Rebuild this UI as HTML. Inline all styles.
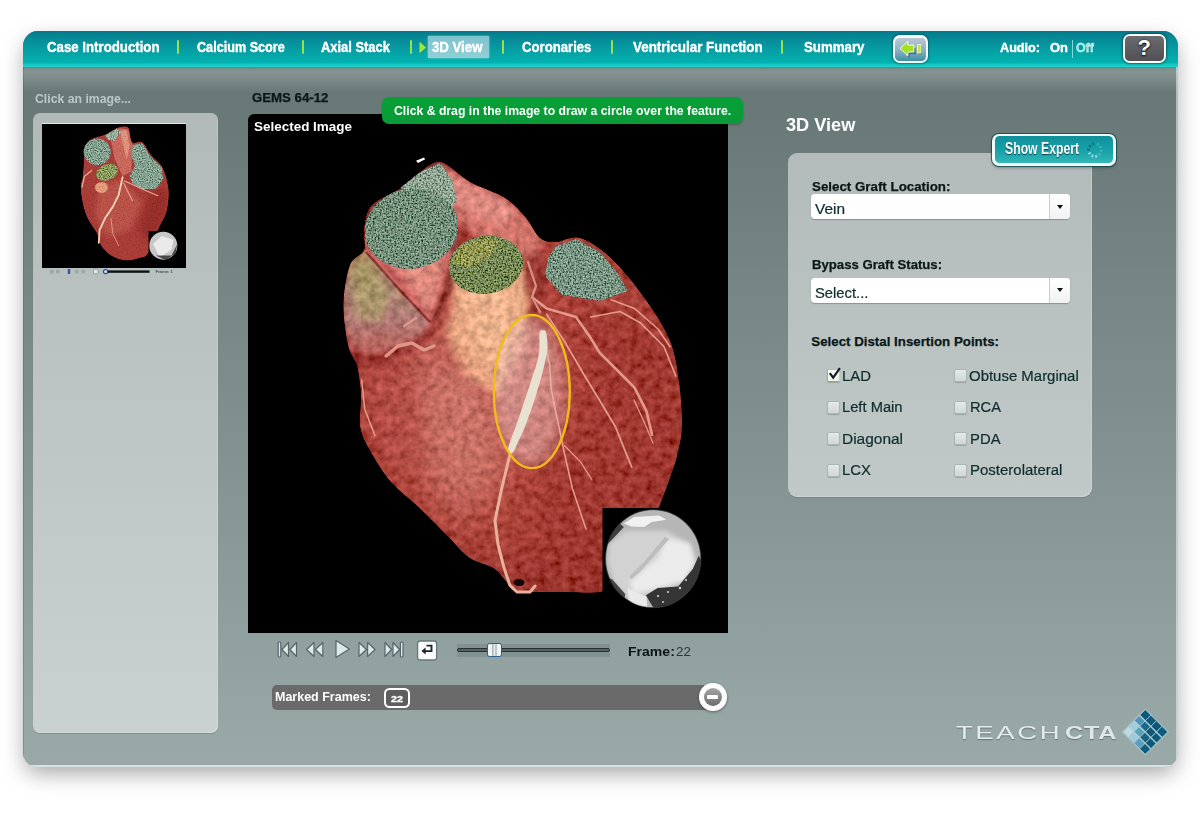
<!DOCTYPE html>
<html lang="en">
<head>
<meta charset="utf-8">
<title>TEACH CTA - 3D View</title>
<style>
*{box-sizing:border-box;margin:0;padding:0}
html,body{width:1200px;height:818px;background:#fff;overflow:hidden}
body{font-family:"Liberation Sans",sans-serif;position:relative}
#frame{position:absolute;left:23px;top:31px;width:1155px;height:736px;border-radius:15px 15px 14px 14px;
 box-shadow:0 8px 22px -2px rgba(0,0,0,.36);overflow:hidden;
 background:linear-gradient(#5a8a84 36px,#7d8f8c 38px,#859391 41px,#7a8a88 49px,#677876 61px,#6b7b79 114px,#98a8a6 709px,#99a9a7 100%)}
#frame:after{content:"";position:absolute;left:0;right:0;bottom:0;height:2px;background:rgba(235,245,245,.75)}
#rline{position:absolute;right:0;top:36px;bottom:0;width:2px;background:rgba(235,245,245,.55)}
#lline{position:absolute;left:0;top:36px;bottom:0;width:1px;background:rgba(80,95,95,.35)}
#nav{position:absolute;left:0;top:0;width:100%;height:36px;
 background:linear-gradient(#04788a 0,#058492 12%,#0797a0 42%,#04a8a8 70%,#02b2b0 88%,#14c8c2 93%,#22d0ca 100%)}
#navshadow{display:none}
/* all coordinates below are page coordinates; #ui is offset so that (0,0) = page origin */
#ui{position:absolute;left:-23px;top:-31px;width:1200px;height:818px}
.t{position:absolute;white-space:nowrap;font-weight:bold;transform-origin:0 50%;line-height:1}
.nt{color:#fff;font-size:14px;text-shadow:0 0 1px rgba(255,255,255,.4);-webkit-text-stroke:.3px #fff}
.sep{position:absolute;top:40px;width:1.800px;height:14px;background:#98e444;border-radius:1px;margin-left:-.5px}
.panel{position:absolute;background:rgba(255,255,255,.49);border-radius:7px;box-shadow:inset -1px -1px 0 rgba(255,255,255,.18),0 1px 1px rgba(60,80,80,.25)}
.dk{color:#0a1818;-webkit-text-stroke:.25px #0a1818}
.ar{font-weight:normal;color:#0e2e2e;-webkit-text-stroke:.22px #0e2e2e}
.sel{position:absolute;left:811px;width:259px;height:25px;background:#fff;border-radius:4px;box-shadow:0 1px 1px rgba(0,0,0,.25)}
.sel i{position:absolute;right:0;top:0;width:21px;height:25px;border-left:1px solid #c8cccc;border-radius:0 4px 4px 0;background:linear-gradient(#fff,#f0f2f2)}
.sel i:after{content:"";position:absolute;left:6.500px;top:10.500px;border:3px solid transparent;border-top:4px solid #111;border-bottom:0}
.cb{position:absolute;width:13px;height:13px;border-radius:2px;background:linear-gradient(#e4e9e9,#cfd7d7);border:1px solid #aab5b5;box-shadow:0 1px 1px rgba(0,0,0,.18)}
</style>
</head>
<body>
<div id="frame">
  <div id="nav"></div>
  <div id="navshadow"></div>
  <div id="lline"></div><div id="rline"></div>
  <div id="ui">
<!-- NAV decorations -->
<i class="sep" style="left:177.5px"></i><i class="sep" style="left:302.5px"></i><i class="sep" style="left:410.5px"></i>
<i class="sep" style="left:502.5px"></i><i class="sep" style="left:611.5px"></i><i class="sep" style="left:781.5px"></i>
<div style="position:absolute;left:427.5px;top:36px;width:61px;height:22px;background:linear-gradient(#7fc3cf,#8fd0d6);box-shadow:0 0 2px rgba(255,255,255,.5)"></div>
<svg style="position:absolute;left:419px;top:41px" width="8" height="13" viewBox="0 0 8 13"><path d="M.5.8 7 6.5.5 12.2z" fill="#a4e634"/></svg>
<i style="position:absolute;left:1072px;top:40px;width:1px;height:18px;background:#7fdcdc"></i>
<!-- back button -->
<div style="position:absolute;left:892.5px;top:35px;width:35.5px;height:28px;border-radius:7px;background:#f4fbfb;box-shadow:0 0 2px 1px rgba(0,70,80,.55)">
  <div style="position:absolute;left:2.5px;top:2.5px;right:2.5px;bottom:2.5px;border-radius:4.5px;background:linear-gradient(#bcc6d2,#8fb3c4 50%,#3f8ea4)"></div>
  <svg style="position:absolute;left:0;top:0" width="36" height="28" viewBox="0 0 36 28">
    <path d="M8 14.5 15.5 7.5v3.8h6v6.4h-6v3.8z" fill="#1d4a5a" opacity=".55" transform="translate(1.2,1.6)"/>
    <path d="M7 13.5 14.8 6v4h6v7h-6v4z" fill="#a6e01e" stroke="#f4fbe8" stroke-width="1"/>
    <rect x="25.6" y="10.8" width="3.4" height="8.4" fill="#1d4a5a" opacity=".5"/>
    <rect x="24.6" y="9.6" width="3.4" height="8.4" fill="#c4e43c" stroke="#f0f8e0" stroke-width=".8"/>
  </svg>
</div>
<!-- help button -->
<div style="position:absolute;left:1122.5px;top:33.7px;width:43.5px;height:29.6px;border-radius:7px;background:#fff;box-shadow:0 0 2px 1px rgba(0,60,70,.6)">
  <div style="position:absolute;left:2.5px;top:2.5px;right:2.5px;bottom:2.5px;border-radius:4.5px;background:linear-gradient(#6b6b70,#5b5b60 55%,#505055)"></div>
  <span style="position:absolute;left:0;width:100%;top:2px;text-align:center;font-weight:bold;font-size:22px;line-height:24px;color:#fff;text-shadow:0 1px 2px #111,0 0 2px #222">?</span>
</div>

<!-- LEFT panel -->
<div class="panel" style="left:33px;top:113px;width:185px;height:620px"></div>
<div style="position:absolute;left:41.5px;top:122.5px;width:144.5px;height:145px;background:#000;border-top:1px solid #dfe8e8"></div>

<!-- MAIN black image panel -->
<div style="position:absolute;left:248px;top:113.5px;width:480px;height:519.5px;background:#000;border-radius:6px 0 0 0"></div>
<!-- tooltip -->
<div style="position:absolute;left:382.300px;top:96.500px;width:360.700px;height:27.500px;border-radius:7px;background:linear-gradient(#06a036,#0a9a38);box-shadow:0 1px 2px rgba(0,0,0,.25)"></div>

<!-- RIGHT panel -->
<div class="panel" style="left:787.5px;top:152.5px;width:304px;height:344.5px;border-radius:9px"></div>
<!-- show expert -->
<div style="position:absolute;left:992px;top:133.5px;width:123.5px;height:32px;border-radius:7px;background:#f2fbfb;box-shadow:0 0 0 1px rgba(10,70,80,.75),0 2px 3px rgba(0,0,0,.3)">
  <div style="position:absolute;left:2.5px;top:2.5px;right:2.5px;bottom:2.5px;border-radius:4.5px;background:linear-gradient(#0f8f9b,#1aa4aa 60%,#35b8b8)"></div>
  <svg style="position:absolute;left:92px;top:5px" width="22" height="22" viewBox="-11 -11 22 22"><g fill="none" stroke-width="2.6" stroke-dasharray="1.7 2.1"><path d="M-1-6.200A6.200 6.200 0 0 0-5.800 2.600" stroke="#0a5a66" opacity=".85"/><path d="M-5.800 2.600A6.200 6.200 0 0 0 4 4.800" stroke="#b4e6ea" opacity=".9"/><path d="M4 4.800A6.200 6.200 0 0 0 1-6.100" stroke="#7cccd4" opacity=".45"/></g></svg>
</div>
<div class="sel" style="top:194.2px"><i></i></div>
<div class="sel" style="top:277.5px"><i></i></div>
<!-- checkboxes -->
<i class="cb" style="left:827px;top:368.500px;width:12.500px;height:13px;background:linear-gradient(#f8fcf4,#eaf4e0);border-color:#b4c2a0 #c4d0b4 #98a878 #a4b288"></i>
<svg style="position:absolute;left:826px;top:364px" width="18" height="18" viewBox="826 364 18 18"><path d="M829.800 373.200 833.200 377.700 839.900 368.100" fill="none" stroke="#15152e" stroke-width="2.100" stroke-linejoin="miter"/></svg>
<i class="cb" style="left:826.5px;top:400.5px"></i>
<i class="cb" style="left:826.5px;top:432.2px"></i>
<i class="cb" style="left:826.5px;top:464px"></i>
<i class="cb" style="left:953.8px;top:369px"></i>
<i class="cb" style="left:953.8px;top:400.5px"></i>
<i class="cb" style="left:953.8px;top:432.2px"></i>
<i class="cb" style="left:953.8px;top:464px"></i>

<!-- transport controls -->
<svg style="position:absolute;left:272px;top:636px" width="172" height="28" viewBox="272 636 172 28">
  <g fill="#dbe9e9" stroke="#55666a" stroke-width="1.2" stroke-linejoin="round">
    <rect x="278.2" y="642" width="2.6" height="15" rx="1"/>
    <path d="M288.5 642.5v14l-6.6-7z"/><path d="M296.5 642.5v14l-6.6-7z"/>
    <path d="M314 642.5v14l-7.4-7z"/><path d="M322.8 642.5v14l-7.4-7z"/>
    <path d="M336 640.5v17l13.4-8.5z"/>
    <path d="M359 642.5v14l7.4-7z"/><path d="M367.6 642.5v14l7.4-7z"/>
    <path d="M385 642.5v14l6.6-7z"/><path d="M393 642.5v14l6.6-7z"/>
    <rect x="400.4" y="642" width="2.6" height="15" rx="1"/>
  </g>
  <rect x="417.6" y="641" width="19" height="19" rx="2.5" fill="#fbfdfd" stroke="#66777a" stroke-width="1.3"/>
  <path d="M426.500 645.600h5v5.500h-8.400" fill="none" stroke="#1c2628" stroke-width="1.900"/>
  <path d="M425.6 647.6 421.4 651.1 425.6 654.6z" fill="#1c2628"/>
</svg>
<!-- slider -->
<div style="position:absolute;left:457px;top:643.5px;width:152.5px;height:13px;background:rgba(90,108,106,.28)"></div>
<div style="position:absolute;left:456.500px;top:647.700px;width:153.500px;height:4.800px;border-radius:2.500px;background:#566262;border:1.300px solid #283232"></div>
<div style="position:absolute;left:486.500px;top:642.500px;width:15px;height:14.500px;border-radius:2.5px;border:1.6px solid #2c5f92;background:linear-gradient(90deg,#eef3f6 0,#eef3f6 30%,#9aa4aa 36%,#e2e8ec 46%,#e2e8ec 54%,#9aa4aa 62%,#eef3f6 70%)"></div>
<!-- marked frames bar -->
<div style="position:absolute;left:272px;top:685px;width:440px;height:24.600px;border-radius:5px 0 0 5px;background:#6a6a6a"></div>
<div style="position:absolute;left:384.200px;top:688px;width:26.300px;height:19.700px;border:2.200px solid #fff;border-radius:5.500px;background:#5e5e5e"></div>
<div style="position:absolute;left:699.200px;top:683.300px;width:27.400px;height:27.400px;border-radius:50%;background:#fdfdfd;box-shadow:0 1px 3px rgba(0,0,0,.4)">
  <div style="position:absolute;left:4.600px;top:4.600px;right:4.600px;bottom:4.600px;border-radius:50%;background:linear-gradient(#a4a4a4,#6c6c6c)"></div>
  <div style="position:absolute;left:8.200px;top:11.700px;width:11px;height:4px;border-radius:1px;background:#fff"></div>
</div>

<!-- TEACH CTA logo -->
<svg style="position:absolute;left:1121px;top:708px" width="50" height="50" viewBox="1121 708 50 50">
  <g transform="translate(1145.300 709.600) rotate(45) scale(7.900)">
    <rect x="-.12" y="-.12" width="4.240" height="4.240" fill="#b4d2da" opacity=".55"/>
    <g stroke="#9ec4d0" stroke-width=".1">
      <rect x="0" y="0" width="1" height="1" fill="#0e5878"/><rect x="1" y="0" width="1" height="1" fill="#0e5878"/><rect x="2" y="0" width="1" height="1" fill="#0d5675"/><rect x="3" y="0" width="1" height="1" fill="#0e5a7a"/>
      <rect x="0" y="1" width="1" height="1" fill="#4f95b8"/><rect x="1" y="1" width="1" height="1" fill="#1c6a8a"/><rect x="2" y="1" width="1" height="1" fill="#0e5878"/><rect x="3" y="1" width="1" height="1" fill="#0e5a7a"/>
      <rect x="0" y="2" width="1" height="1" fill="#a2ccda"/><rect x="1" y="2" width="1" height="1" fill="#5aa2be"/><rect x="2" y="2" width="1" height="1" fill="#16627f"/><rect x="3" y="2" width="1" height="1" fill="#0e5878"/>
      <rect x="0" y="3" width="1" height="1" fill="#bcdae2"/><rect x="1" y="3" width="1" height="1" fill="#a0cad8"/><rect x="2" y="3" width="1" height="1" fill="#5a9ec0"/><rect x="3" y="3" width="1" height="1" fill="#0f5c7c"/>
    </g>
    <path d="M0 1.040h4M0 2.040h4M0 3.040h4" stroke="#b8d4dc" stroke-width=".16" opacity=".8"/>
  </g>
</svg>
<span class="t nt" style="left:47.0px;top:39.2px;font-size:15.1px;transform:scaleX(0.877);">Case Introduction</span>
<span class="t nt" style="left:196.5px;top:39.2px;font-size:15.1px;transform:scaleX(0.837);">Calcium Score</span>
<span class="t nt" style="left:320.6px;top:39.2px;font-size:15.1px;transform:scaleX(0.855);">Axial Stack</span>
<span class="t nt" style="left:432.1px;top:39.2px;font-size:15.1px;transform:scaleX(0.875);">3D View</span>
<span class="t nt" style="left:522.0px;top:39.2px;font-size:15.1px;transform:scaleX(0.871);">Coronaries</span>
<span class="t nt" style="left:632.9px;top:39.2px;font-size:15.1px;transform:scaleX(0.889);">Ventricular Function</span>
<span class="t nt" style="left:804.0px;top:39.2px;font-size:15.1px;transform:scaleX(0.879);">Summary</span>
<span class="t nt" style="left:1000.4px;top:41.7px;font-size:12.2px;transform:scaleX(1.038);">Audio:</span>
<span class="t nt" style="left:1049.6px;top:41.7px;font-size:12.2px;transform:scaleX(1.061);">On</span>
<span class="t nt" style="left:1075.9px;top:41.7px;font-size:12.2px;transform:scaleX(1.015);color:#86ece6;text-shadow:none">Off</span>
<span class="t " style="left:34.6px;top:93.0px;font-size:12.0px;transform:scaleX(1.021);color:#bcc8c7">Click an image...</span>
<span class="t dk" style="left:252.0px;top:92.4px;font-size:12.8px;transform:scaleX(1.032);">GEMS 64-12</span>
<span class="t " style="left:254.3px;top:120.1px;font-size:13.5px;transform:scaleX(0.997);color:#fff">Selected Image</span>
<span class="t " style="left:393.6px;top:105.2px;font-size:12.3px;transform:scaleX(0.995);color:#fff">Click &amp; drag in the image to draw a circle over the feature.</span>
<span class="t " style="left:786.0px;top:116.3px;font-size:18.0px;transform:scaleX(1.009);color:#fff">3D View</span>
<span class="t " style="left:1005.0px;top:141.3px;font-size:16.8px;transform:scaleX(0.729);color:#fff;text-shadow:0 1px 1px rgba(0,40,50,.8)">Show Expert</span>
<span class="t dk" style="left:811.8px;top:179.5px;font-size:13.3px;transform:scaleX(1.002);">Select Graft Location:</span>
<span class="t dk" style="left:811.7px;top:259.1px;font-size:12.9px;transform:scaleX(1.020);">Bypass Graft Status:</span>
<span class="t dk" style="left:811.3px;top:334.9px;font-size:13.3px;transform:scaleX(1.000);">Select Distal Insertion Points:</span>
<span class="t ar" style="left:815.4px;top:202.4px;font-size:14.3px;transform:scaleX(1.080);">Vein</span>
<span class="t ar" style="left:814.6px;top:286.1px;font-size:14.0px;transform:scaleX(1.056);">Select...</span>
<span class="t ar" style="left:842.2px;top:368.8px;font-size:14.7px;transform:scaleX(1.016);">LAD</span>
<span class="t ar" style="left:842.2px;top:400.1px;font-size:14.7px;transform:scaleX(1.002);">Left Main</span>
<span class="t ar" style="left:841.9px;top:432.1px;font-size:14.8px;transform:scaleX(1.045);">Diagonal</span>
<span class="t ar" style="left:842.2px;top:463.4px;font-size:14.7px;transform:scaleX(1.017);">LCX</span>
<span class="t ar" style="left:969.3px;top:368.8px;font-size:14.7px;transform:scaleX(1.018);">Obtuse Marginal</span>
<span class="t ar" style="left:969.7px;top:400.1px;font-size:14.7px;transform:scaleX(0.998);">RCA</span>
<span class="t ar" style="left:970.2px;top:432.1px;font-size:14.8px;transform:scaleX(1.004);">PDA</span>
<span class="t ar" style="left:969.9px;top:463.4px;font-size:14.7px;transform:scaleX(1.020);">Posterolateral</span>
<span class="t " style="left:627.7px;top:645.0px;font-size:13.3px;transform:scaleX(1.056);color:#0d1515">Frame:</span>
<span class="t " style="left:676.2px;top:645.0px;font-size:13.3px;transform:scaleX(1.005);font-weight:normal;color:#2c3838">22</span>
<span class="t " style="left:275.3px;top:690.8px;font-size:12.7px;transform:scaleX(0.985);color:#fff">Marked Frames:</span>
<span class="t " style="left:391.4px;top:693.5px;font-size:9.5px;transform:scaleX(1.140);color:#fff;-webkit-text-stroke:.3px #fff">22</span>
<span class="t " style="left:955.6px;top:725.1px;font-size:17.6px;transform:scaleX(1.569);font-weight:normal;color:#e4ebeb;letter-spacing:1.6px;text-shadow:0 1px 1px rgba(60,80,80,.6)">TEACH</span>
<span class="t " style="left:1064.7px;top:725.1px;font-size:17.6px;transform:scaleX(1.433);color:#dfe6e6;letter-spacing:.5px;text-shadow:0 1px 1px rgba(60,80,80,.6)">CTA</span>
<!-- thumbnail heart -->
<svg style="position:absolute;left:41.5px;top:123.5px" width="144.500" height="144" viewBox="41.5 123.500 144.500 144">
<defs>
  <filter id="ttex" x="41" y="123" width="146" height="146" filterUnits="userSpaceOnUse">
    <feTurbulence type="fractalNoise" baseFrequency=".7" numOctaves="2" seed="5" result="n"/>
    <feColorMatrix in="n" type="matrix" values="1.2 0 0 0 .4  1.2 0 0 0 .4  1.2 0 0 0 .4  0 0 0 0 1" result="m"/>
    <feComposite in="SourceGraphic" in2="m" operator="arithmetic" k1="1" k2="0" k3="0" k4="0" result="c"/>
    <feComposite in="c" in2="SourceGraphic" operator="in"/>
  </filter>
  <filter id="tspeck" x="41" y="123" width="146" height="146" filterUnits="userSpaceOnUse">
    <feTurbulence type="fractalNoise" baseFrequency=".9" numOctaves="1" seed="8" result="n"/>
    <feColorMatrix in="n" type="matrix" values="2.4 0 0 0 -.7  2.4 0 0 0 -.7  2.4 0 0 0 -.7  0 0 0 0 1" result="m"/>
    <feComposite in="SourceGraphic" in2="m" operator="arithmetic" k1=".9" k2=".5" k3=".22" k4="-.06" result="c"/>
    <feComposite in="c" in2="SourceGraphic" operator="in"/>
  </filter>
  <filter id="tb"><feGaussianBlur stdDeviation="2.5"/></filter>
  <filter id="tb1"><feGaussianBlur stdDeviation=".5"/></filter>
  <clipPath id="thc"><path d="M118.2 126.8C122.1 125.7 125.8 125.0 128.0 127.4C130.2 129.8 129.2 139.2 131.5 141.5C133.8 143.8 138.5 139.4 141.7 141.5C144.9 143.6 147.1 150.0 150.5 154.2C153.9 158.4 159.4 161.8 162.2 166.9C165.0 172.0 166.5 179.3 167.5 184.5C168.5 189.7 168.5 193.3 168.1 198.2C167.7 203.1 167.0 208.7 165.2 213.9C163.4 219.1 160.2 223.0 157.3 229.5C154.4 236.0 150.8 248.3 147.6 253.0C144.3 257.7 141.7 256.7 137.8 257.9C133.9 259.1 128.7 260.5 124.1 260.0C119.5 259.5 114.3 257.5 110.4 255.0C106.5 252.5 102.9 248.8 100.6 245.2C98.3 241.6 99.0 238.0 96.7 233.4C94.4 228.8 89.4 223.0 86.9 217.8C84.5 212.6 83.1 207.3 82.0 202.1C80.9 196.9 80.1 190.7 80.1 186.5C80.1 182.3 81.5 181.3 82.0 176.7C82.5 172.1 83.2 164.0 83.4 159.1C83.6 154.2 82.2 150.8 83.4 147.4C84.7 144.0 87.4 140.8 90.9 138.6C94.4 136.4 100.0 136.1 104.5 134.1C109.0 132.1 114.3 127.9 118.2 126.8z"/></clipPath>
</defs>
<g filter="url(#ttex)"><g clip-path="url(#thc)">
  <rect x="70" y="120" width="110" height="150" fill="#ac3e38"/>
  <path d="M98.7 184.5 122.1 178.7 141.7 202.1 130.0 229.5 106.5 237.3 94.8 213.9z" fill="#c25a50" filter="url(#tb)" opacity=".8"/>
  <path d="M149.5 190.4 167.1 186.5 167.1 213.9 149.5 241.3 137.8 229.5z" fill="#982e2a" filter="url(#tb)" opacity=".8"/>
  <path d="M110.4 139.6 118.2 127.8 128.0 128.8 131.9 143.5 130.9 170.9 122.1 175.7 114.3 159.1z" fill="#cf6a5e" filter="url(#tb1)"/>
  <path d="M119.2 129.8 126.1 129.8 129.0 145.4 126.1 159.1z" fill="#e8a288" filter="url(#tb1)" opacity=".8"/>
  <ellipse cx="101.0" cy="186.9" rx="6.500" ry="5.500" fill="#e8a07c" filter="url(#tb1)"/>
</g></g>
<g filter="url(#tspeck)">
  <path d="M104.5 134.7 116.3 127.8 120.2 131.7 114.3 140.5 107.5 139.6z" fill="#8fa894"/>
  <ellipse cx="96.7" cy="151.3" rx="13.600" ry="13.300" fill="#789884"/>
  <ellipse cx="106.5" cy="171.8" rx="11.500" ry="8" transform="rotate(-22 106.5 171.8)" fill="#80944c"/>
  <path d="M131.9 144.4 141.7 142.5 149.5 155.2 161.3 166.9 162.8 178.7 155.4 188.8 141.7 188.8 131.9 183.0 129.0 175.2 134.3 165.4 130.9 155.2z" fill="#7a9a86"/>
</g>
<g fill="none" stroke="#e8a898" stroke-linecap="round" stroke-linejoin="round" filter="url(#tb1)">
  <path d="M122.1 176.7 118.2 194.3 112.4 206.1 104.5 217.8 99.1 229.5 98.3 242.2" stroke-width="1.900" stroke="#ecd0b4"/>
  <path d="M123.1 182.6 128.0 192.4 131.9 200.2" stroke-width="1.100"/>
  <path d="M124.1 180.6 141.7 188.5 157.3 195.3" stroke-width="1.100"/>
  <path d="M91.2 169.9 84.0 175.7 81.5 186.5" stroke-width="1.300"/>
  <path d="M110.4 217.8 112.4 233.4 118.2 245.2" stroke-width=".8"/>
</g>
<rect x="148" y="230.500" width="37" height="34" fill="#000"/>
<circle cx="162.800" cy="245.200" r="14" fill="#c6c6c6"/>
<path d="M152.5 243.2 161.3 235.4 173.0 239.3 171.0 249.1 159.3 256.9z" fill="#eaeaea" filter="url(#tb1)"/>
<path d="M155.4 255.0 165.2 259.8 175.0 253.0 176.9 243.2 171.0 255.0z" fill="#4a4a4a" filter="url(#tb1)"/>
</svg>
<!-- thumbnail mini controls -->
<svg style="position:absolute;left:46px;top:268px" width="130" height="8" viewBox="46 268 130 8">
  <g fill="#93a3a5" opacity=".8"><rect x="50" y="269.800" width="3.600" height="3.600"/><rect x="56" y="269.800" width="3.600" height="3.600"/><rect x="75" y="269.800" width="3.600" height="3.600"/><rect x="81.500" y="269.800" width="3.600" height="3.600"/></g>
  <rect x="67.800" y="269" width="2.400" height="5" fill="#3058a8"/>
  <rect x="93.500" y="269.200" width="4.600" height="4.600" rx="1" fill="#dfe7e8" stroke="#5a6a6c" stroke-width=".5"/>
  <rect x="104" y="270.400" width="45.500" height="2.400" fill="#0a1212"/>
  <circle cx="105.600" cy="271.600" r="2.100" fill="#cfdcee" stroke="#1c4a92" stroke-width="1.100"/>
  <text x="155.400" y="273.200" font-family="Liberation Sans,sans-serif" font-size="4.200" font-weight="bold" fill="#2c3a3a" opacity=".85">Frame: 1</text>
</svg>
<!-- MAIN heart image (page coords via viewBox) -->
<svg style="position:absolute;left:248px;top:153px" width="480" height="480" viewBox="248 153 480 480">
<defs>
  <filter id="tex" x="248" y="153" width="480" height="480" filterUnits="userSpaceOnUse">
    <feTurbulence type="fractalNoise" baseFrequency=".13" numOctaves="3" seed="11" result="n"/>
    <feColorMatrix in="n" type="matrix" values="1.2 0 0 0 -.1  1.2 0 0 0 -.1  1.2 0 0 0 -.1  0 0 0 0 1" result="m"/>
    <feComposite in="SourceGraphic" in2="m" operator="arithmetic" k1=".8" k2=".6" k3=".05" k4="-.025" result="c"/>
    <feComposite in="c" in2="SourceGraphic" operator="in"/>
  </filter>
  <filter id="speck" x="248" y="153" width="480" height="480" filterUnits="userSpaceOnUse">
    <feTurbulence type="fractalNoise" baseFrequency=".6" numOctaves="2" seed="3" result="n"/>
    <feColorMatrix in="n" type="matrix" values="2.4 0 0 0 -.7  2.4 0 0 0 -.7  2.4 0 0 0 -.7  0 0 0 0 1" result="m"/>
    <feComposite in="SourceGraphic" in2="m" operator="arithmetic" k1=".9" k2=".5" k3=".22" k4="-.06" result="c"/>
    <feComposite in="c" in2="SourceGraphic" operator="in"/>
  </filter>
  <filter id="b2"><feGaussianBlur stdDeviation="2"/></filter>
  <filter id="b3"><feGaussianBlur stdDeviation="3"/></filter>
  <filter id="b4"><feGaussianBlur stdDeviation="4"/></filter>
  <filter id="b8"><feGaussianBlur stdDeviation="8"/></filter>
  <filter id="b14"><feGaussianBlur stdDeviation="14"/></filter>
  <filter id="b1"><feGaussianBlur stdDeviation=".6"/></filter>
  <clipPath id="hc"><path d="M441.0 162.0C449.3 163.7 459.3 176.0 470.0 182.0C480.7 188.0 495.7 192.0 505.0 198.0C514.3 204.0 520.2 211.3 526.0 218.0C531.8 224.7 535.0 234.0 540.0 238.0C545.0 242.0 549.3 242.0 556.0 242.0C562.7 242.0 570.8 235.3 580.0 238.0C589.2 240.7 600.0 247.7 611.0 258.0C622.0 268.3 636.2 286.2 646.0 300.0C655.8 313.8 664.5 327.3 670.0 341.0C675.5 354.7 677.0 368.0 679.0 382.0C681.0 396.0 682.2 413.3 682.0 425.0C681.8 436.7 679.7 444.2 678.0 452.0C676.3 459.8 675.2 462.8 672.0 472.0C668.8 481.2 664.3 494.0 659.0 507.0C653.7 520.0 647.5 537.3 640.0 550.0C632.5 562.7 620.7 576.0 614.0 583.0C607.3 590.0 609.0 590.5 600.0 592.0C591.0 593.5 571.2 592.0 560.0 592.0C548.8 592.0 540.0 592.0 533.0 592.0C526.0 592.0 521.5 592.3 518.0 592.0C514.5 591.7 514.3 592.2 512.0 590.0C509.7 587.8 507.2 582.7 504.0 579.0C500.8 575.3 498.8 571.6 493.0 568.0C487.2 564.4 476.6 562.7 469.0 557.4C461.4 552.1 455.6 544.1 447.5 536.0C439.4 527.9 430.0 518.0 420.6 509.0C411.2 500.0 399.5 491.8 391.0 482.0C382.5 472.2 374.8 459.3 369.6 450.0C364.4 440.7 361.4 435.0 360.0 426.0C358.6 417.0 361.5 406.0 361.0 396.0C360.5 386.0 359.2 374.5 357.0 366.0C354.8 357.5 350.2 355.3 348.0 345.0C345.8 334.7 343.2 317.3 343.5 304.0C343.8 290.7 346.6 274.0 350.0 265.0C353.4 256.0 361.7 256.2 364.0 250.0C366.3 243.8 362.7 235.5 364.0 228.0C365.3 220.5 365.8 211.7 372.0 205.0C378.2 198.3 393.0 193.5 401.0 188.0C409.0 182.5 413.3 176.3 420.0 172.0C426.7 167.7 432.7 160.3 441.0 162.0z"/></clipPath>
  <radialGradient id="hg" cx="510" cy="390" r="250" gradientUnits="userSpaceOnUse">
    <stop offset="0" stop-color="#b84e44"/><stop offset=".6" stop-color="#aa4239"/><stop offset=".88" stop-color="#93312b"/><stop offset="1" stop-color="#6e201c"/>
  </radialGradient>
</defs>
<rect x="248" y="153" width="480" height="480" fill="#000"/>
<g filter="url(#tex)">
 <g clip-path="url(#hc)">
  <rect x="330" y="155" width="370" height="445" fill="url(#hg)"/>
  <!-- right ventricle -->
  <path d="M570 300 690 330 690 520 600 600 530 600 540 470 580 400z" fill="#9c362f" filter="url(#b14)" opacity=".7"/>
  <!-- central lighter area -->
  <path d="M400 350 470 310 528 322 522 430 490 510 452 525 410 460z" fill="#c46a60" filter="url(#b14)" opacity=".7"/>
  <path d="M420 380 480 360 500 470 450 500z" fill="#d07e72" filter="url(#b14)" opacity=".6"/>
  <path d="M362 380 410 365 420 470 385 460z" fill="#b5504a" filter="url(#b8)" opacity=".8"/>
  <!-- left atrial appendage (speckled tan) -->
  <linearGradient id="apg" x1="0" y1="255" x2="0" y2="356" gradientUnits="userSpaceOnUse"><stop offset="0" stop-color="#aa8e60"/><stop offset=".35" stop-color="#aa8672"/><stop offset=".65" stop-color="#b27a76"/><stop offset="1" stop-color="#b65a52"/></linearGradient>
  <path d="M349 262 366 250 398 288 430 322 424 333 405 345 372 357 350 347 344 318 343.500 290z" fill="url(#apg)" filter="url(#b2)"/>
  <path d="M354 270 368 262 388 296 380 322 356 318z" fill="#a8a468" filter="url(#b3)" opacity=".6"/>
  <!-- top roof pink -->
  <path d="M430 163 470 182 505 198 528 220 542 240 540 262 505 250 470 232 452 215z" fill="#d2746a" filter="url(#b3)"/>
  <path d="M441 164 470 183 500 197 520 214 500 226 470 214 452 200z" fill="#e09088" filter="url(#b3)" opacity=".7"/>
  <!-- aorta (tan/orange) -->
  <path d="M448 268 452 300 446 335 466 376 500 396 522 352 530 300 524 262z" fill="#e3a07e" filter="url(#b4)"/>
  <path d="M458 285 520 282 524 320 498 372 470 348z" fill="#efb690" filter="url(#b8)" opacity=".85"/>
  <!-- pulmonary tube -->
  <path d="M364 238 458 234 453 258 444 290 434 316 430 323 398 288 366 252z" fill="#c8645e" filter="url(#b1)"/>
  <path d="M392 262 446 258 434 306 428 312z" fill="#de8c80" filter="url(#b3)" opacity=".9"/>
  <!-- shading between tubes and under appendage -->
  <path d="M455 222 462 250 452 288 437 322 432 320 443 290 450 262z" fill="#7a2a28" filter="url(#b2)" opacity=".8"/>
  <path d="M366 252 398 288 430 322" fill="none" stroke="#6e2422" stroke-width="2.400" filter="url(#b1)" opacity=".75"/>
  <path d="M524 262 532 300 526 330 540 312 548 282 540 246z" fill="#8c2e2c" filter="url(#b3)" opacity=".7"/>
  <path d="M350 348 372 358 405 346 424 334 432 324 436 334 410 354 376 368 352 362z" fill="#8a2c2a" filter="url(#b2)" opacity=".55"/>
  <!-- ellipse interior lighter -->
  <ellipse cx="530" cy="392" rx="30" ry="70" fill="#d69490" opacity=".5" filter="url(#b4)"/>
 </g>
</g>
<!-- green cut surfaces -->
<g filter="url(#speck)">
  <path d="M400 188 420 172 440 163 452 180 457 200 448 212 430 196z" fill="#869e8a"/>
  <ellipse cx="411.5" cy="228.500" rx="47" ry="40" transform="rotate(-12 411.5 228.5)" fill="#67866f"/>
  <ellipse cx="486" cy="264.700" rx="37.5" ry="29" transform="rotate(-8 486 264.7)" fill="#697e40"/>
  <path d="M452 262 462 246 482 238 500 240 490 256 470 268z" fill="#94963c" opacity=".75"/>
  <path d="M545 276 548 258 556 246 576 239 600 252 617 272 628 291 600 301 562 295z" fill="#6c8c78"/>
</g>
<!-- vessels -->
<g fill="none" stroke="#eca494" stroke-linecap="round" stroke-linejoin="round" filter="url(#b1)" opacity=".9">
  <path d="M532 297 546.7 308.600 576 317 590.700 338 599.500 352.600 617 370 634.700 387.800 646.400 411 652 434.700" stroke-width="2.600"/>
  <path d="M590.700 317 620 311.500 640.600 323 664 346.700 675.800 376" stroke-width="1.7"/>
  <path d="M611 299.800 634.700 308.600 658 329 670 346.700" stroke-width="1.6"/>
  <path d="M546.700 314.400 564 340.800 584.800 376 599.400 400 615.600 427 626.300 453.800 631.700 467" stroke-width="1.8"/>
  <path d="M543.800 340.800 549.600 364 551 387.800 555.500 411 559 427 564.500 453.800 572.500 488.800 586 529" stroke-width="1.6"/>
  <path d="M564.500 445.700 580.600 461.900 592 480" stroke-width="1.3"/>
  <path d="M634 400 645 424 653 443" stroke-width="1.3"/>
  <path d="M361.700 380 364.700 409 375 435.700" stroke-width="1.5"/>
  <path d="M386 356 398 346 412 343 424 350 434 346" stroke-width="3.4" stroke="#e4a090"/>
  <path d="M404 326 416 318" stroke-width="2.2" stroke="#e4a090"/>
  <path d="M528 262 536 286 532 297 540 312" stroke-width="2.2" stroke="#e09a8c"/>
</g>
<!-- LAD + graft -->
<path d="M510.500 452 501 491.500 495 520.800 498 544.300 504 567.800 510 585.400 517 592 530 592 535 586" fill="none" stroke="#e9b09c" stroke-width="3" stroke-linecap="round" stroke-linejoin="round" filter="url(#b1)"/>
<path d="M539.6 332.6C539.0 335.5 539.8 343.1 539.4 347.8C539.0 352.6 538.6 356.2 537.4 361.1C536.2 366.0 534.0 371.6 532.3 376.9C530.6 382.2 528.9 387.7 527.1 393.1C525.3 398.5 523.5 403.8 521.7 409.2C519.9 414.6 518.0 420.4 516.2 425.5C514.4 430.6 512.3 435.5 510.9 439.5C509.5 443.5 508.2 447.1 508.0 449.4C507.8 451.7 508.9 452.7 509.8 453.1C510.7 453.5 512.2 453.4 513.6 451.6C515.0 449.8 516.1 446.2 517.9 442.3C519.7 438.4 522.1 433.5 524.2 428.5C526.3 423.5 528.4 417.6 530.3 412.2C532.2 406.8 534.0 401.3 535.7 395.9C537.4 390.4 539.2 385.0 540.7 379.5C542.2 374.0 543.6 368.1 544.8 362.9C545.9 357.7 547.4 353.3 547.6 348.2C547.8 343.1 546.8 335.4 546.0 332.4C545.2 329.4 543.9 330.3 542.8 330.3C541.7 330.3 540.2 329.7 539.6 332.6z" fill="#e4dcc8" filter="url(#b1)"/>
<ellipse cx="519" cy="582.500" rx="5.500" ry="3.600" fill="#140606"/>
<path d="M416 160.800 424 157.400 425.200 159.200 418 163z" fill="#fff"/>
<!-- drawn circle -->
<ellipse cx="531.800" cy="391.600" rx="38" ry="76.600" fill="rgba(255,255,255,.15)" stroke="#f0bc1c" stroke-width="2.300"/>
<!-- inset -->
<rect x="602.5" y="508" width="100" height="100" fill="#000"/>
<clipPath id="ic"><ellipse cx="653.200" cy="558.700" rx="47.700" ry="49"/></clipPath>
<g clip-path="url(#ic)">
  <rect x="604" y="508" width="100" height="102" fill="#b6b6b6"/>
  <path d="M609.2 544.0 625.3 530.8 666.4 530.8 689.9 544.0 695.8 563.1 684.0 582.1 651.7 593.9 629.7 602.7 613.6 582.1 607.7 561.6z" fill="#d2d2d2" filter="url(#b2)"/>
  <path d="M666.4 538.1 689.9 544.0 695.0 563.1 684.0 580.7 657.6 588.0 634.1 593.9 629.7 582.1 644.4 568.9 657.6 558.7z" fill="#ebebeb" filter="url(#b2)"/>
  <path d="M623.9 523.5 634.1 516.9 659.1 515.4 666.4 519.8 651.7 522.0 644.4 527.1 631.2 526.4z" fill="#f1f1f1" filter="url(#b1)"/>
  <path d="M664.9 536.7 669.3 538.9 640.0 571.9 631.2 579.2 629.4 576.3 644.4 561.6z" fill="#bdbdbd" filter="url(#b1)"/>
  <path d="M645.9 595.3 657.6 588.0 678.1 586.5 692.8 568.9 698.7 555.7 704.6 567.5 698.7 590.9 678.1 608.6 654.7 610.0z" fill="#363636" filter="url(#b1)"/>
  <path d="M604.8 529.3 618.0 522.0 623.9 527.1 613.6 538.1 607.7 544.0z" fill="#3c3c3c" filter="url(#b1)"/>
  <path d="M603.3 576.3 612.1 579.2 625.3 593.9 623.9 602.7 610.7 593.9z" fill="#444" filter="url(#b1)"/>
  <path d="M627.5 588.0 640.0 593.9 646.6 596.8 647.3 607.8 635.6 606.4 629.0 599.8z" fill="#e9e9e9" filter="url(#b1)"/>
  <g fill="#d8d8d8"><circle cx="658" cy="596" r="1.1"/><circle cx="668" cy="592" r="1"/><circle cx="680" cy="588" r="1.2"/><circle cx="686" cy="580" r="1"/><circle cx="663" cy="602" r=".9"/><circle cx="692" cy="568" r=".9"/></g>
</g>
<ellipse cx="653.200" cy="558.700" rx="47.700" ry="49" fill="none" stroke="#2a2a2a" stroke-width="1.200" opacity=".6"/>
</svg>
  </div>
</div>
</body>
</html>
